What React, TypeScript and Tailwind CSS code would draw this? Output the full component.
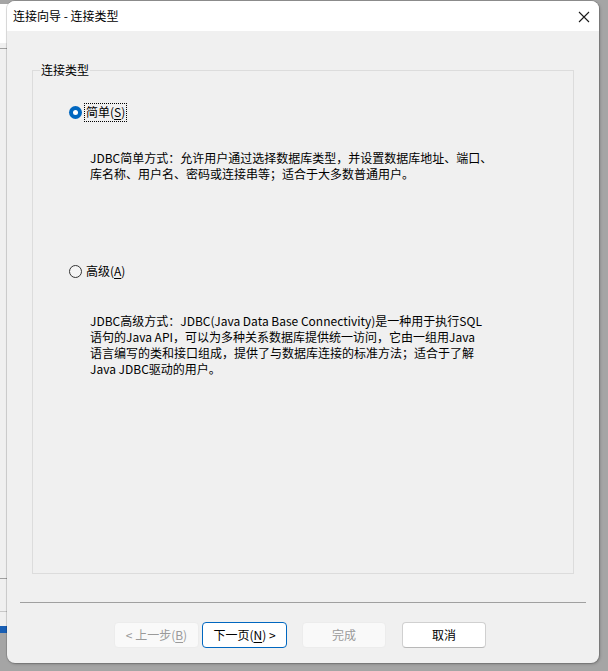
const font = { fontFamily: '"Noto Sans CJK SC", "Microsoft YaHei", sans-serif' };

const Mn = ({ c }: { c: string }) => <span className="underline underline-offset-2">{c}</span>;

const App = () => {
  return (
    <div className="relative w-[608px] h-[671px] bg-[#a5a5a5] overflow-hidden text-[12px] text-black" style={font}>
      {/* window behind the dialog */}
      <div className="absolute left-0 top-[4px] w-[12px] h-[629px] bg-[#f0f0f0] flex flex-col">
        <div className="h-[39px] bg-white" />
        <div className="h-[5px]" />
        <div className="h-px bg-[#a0a0a0]" />
        <div className="h-[529px]" />
        <div className="h-px bg-[#a0a0a0]" />
        <div className="h-[32px]" />
        <div className="h-px bg-[#c8c8c8]" />
        <div className="h-[14px]" />
        <div className="h-[7px] bg-[#1a5fb4]" />
      </div>

      {/* dialog */}
      <div className="absolute left-[7px] top-[1px] w-[592px] h-[662px] rounded-[8px] overflow-hidden bg-[#f0f0f0] flex flex-col shadow-[0_0_0_1px_rgba(0,0,0,0.12),1px_1px_3px_rgba(0,0,0,0.25)]">
        <div className="h-[30px] bg-white flex items-center justify-between pl-[6px] pr-[9px] shrink-0">
          <span className="leading-4">连接向导 - 连接类型</span>
          <svg width="12" height="12" viewBox="0 0 12 12" className="mt-[1px]">
            <path d="M1 1 L11 11 M11 1 L1 11" stroke="#1a1a1a" strokeWidth="1.1" />
          </svg>
        </div>

        <div className="flex-1 flex flex-col">
          {/* group box */}
          <div className="relative mt-[39px] ml-[25px] w-[542px] h-[504px] border border-[#dcdcdc]">
            <span className="absolute -top-[9px] left-[7px] px-[1px] bg-[#f0f0f0] leading-4">连接类型</span>

            <div className="flex flex-col pt-[31px] pl-[36px]">
              <div className="flex items-center h-[20px]">
                <span className="w-[13px] h-[13px] rounded-full bg-[#0067c0] flex items-center justify-center">
                  <span className="w-[5px] h-[5px] rounded-full bg-white" />
                </span>
                <span className="ml-[2px] px-px border border-dotted border-black leading-4 h-[19px] flex items-center">
                  简单(<Mn c="S" />)
                </span>
              </div>
              <p className="mt-[28px] pl-[21px] leading-4 whitespace-nowrap">
                JDBC简单方式：允许用户通过选择数据库类型，并设置数据库地址、端口、<br />
                库名称、用户名、密码或连接串等；适合于大多数普通用户。
              </p>

              <div className="flex items-center h-[20px] mt-[79px]">
                <span className="w-[13px] h-[13px] rounded-full border border-[#333333] bg-[#f5f5f5]" />
                <span className="ml-[3px] px-px leading-4">
                  高级(<Mn c="A" />)
                </span>
              </div>
              <p className="mt-[32px] pl-[21px] leading-4 whitespace-nowrap">
                JDBC高级方式：JDBC(Java Data Base Connectivity)是一种用于执行SQL<br />
                语句的Java API，可以为多种关系数据库提供统一访问，它由一组用Java<br />
                语言编写的类和接口组成，提供了与数据库连接的标准方法；适合于了解<br />
                Java JDBC驱动的用户。
              </p>
            </div>
          </div>

          <div className="mt-[28px] ml-[13px] w-[566px] h-px bg-[#a0a0a0]" />

          <div className="flex mt-[19px] ml-[107px]">
            <button disabled className="w-[85px] h-[26px] rounded-[4px] bg-[#f9f9f9] border border-[#ececec] text-[#9a9a9a]">
              &lt; 上一步(<Mn c="B" />)
            </button>
            <button className="ml-[3px] w-[85px] h-[26px] rounded-[4px] bg-white border border-[#0067c0] text-black">
              下一页(<Mn c="N" />) &gt;
            </button>
            <button disabled className="ml-[15px] w-[84px] h-[26px] rounded-[4px] bg-[#f9f9f9] border border-[#ececec] text-[#9a9a9a]">
              完成
            </button>
            <button className="ml-[16px] w-[84px] h-[26px] rounded-[4px] bg-white border border-[#d0d0d0] border-b-[#b8b8b8] text-black">
              取消
            </button>
          </div>
        </div>
      </div>
    </div>
  );
};

export default App;
